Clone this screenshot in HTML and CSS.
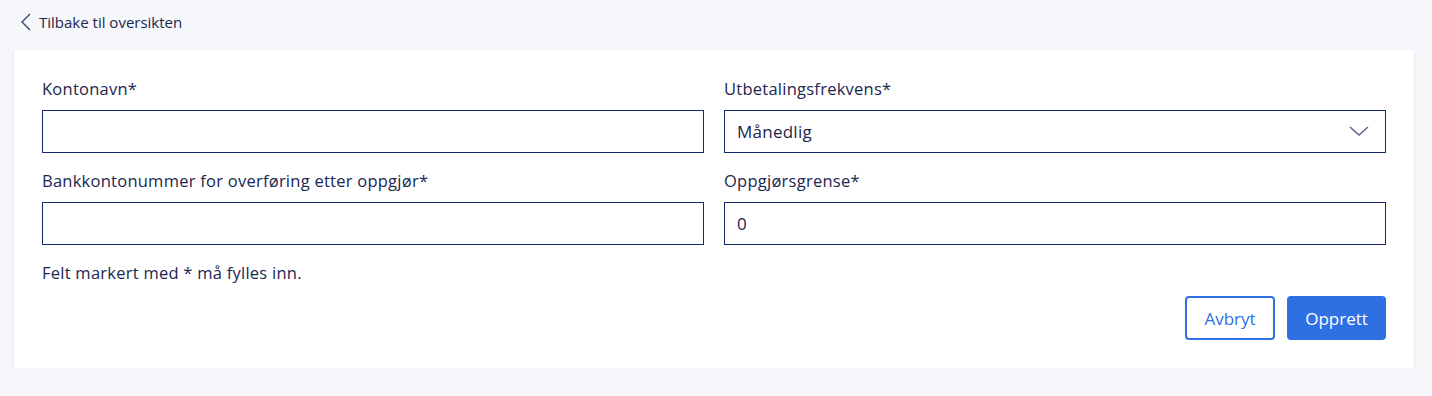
FILE: index.html
```html
<!DOCTYPE html>
<html lang="no">
<head>
  <meta charset="UTF-8" />
  <title>Opprett konto</title>
  <link rel="stylesheet" href="styles.css">
</head>
<body>

<a class="back-link" href="#">
  <svg width="12" height="18" viewBox="0 0 12 18"><path d="M10 1 L2 9 L10 17" fill="none" stroke="#39456b" stroke-width="1.4"/></svg>
  Tilbake til oversikten
</a>

<div class="card">
  <div class="form-grid">
    <div class="field">
      <label>Kontonavn*</label>
      <input type="text" />
    </div>
    <div class="field">
      <label>Utbetalingsfrekvens*</label>
      <div class="select">
        <span>Månedlig</span>
        <svg width="20" height="12" viewBox="0 0 20 12"><path d="M1 1 L10 9 L19 1" fill="none" stroke="#5b6685" stroke-width="1.5"/></svg>
      </div>
    </div>
    <div class="field">
      <label>Bankkontonummer for overføring etter oppgjør*</label>
      <input type="text" />
    </div>
    <div class="field">
      <label>Oppgjørsgrense*</label>
      <input type="text" value="0" />
    </div>
  </div>

  <p class="note">Felt markert med * må fylles inn.</p>

  <div class="actions">
    <button class="btn-outline">Avbryt</button>
    <button class="btn-primary">Opprett</button>
  </div>
</div>

</body>
</html>
```

FILE: styles.css
```css
body {
  margin: 0;
  padding: 0 18px 0 14px;
  background: #f6f7fb;
  font-family: 'Open Sans', sans-serif;
  color: #1b2650;
}

.back-link {
  display: flex;
  align-items: center;
  gap: 7px;
  height: 44px;
  padding-left: 6px;
  font-size: 15px;
  color: #1b2650;
  text-decoration: none;
}

.card {
  background: #fff;
  padding: 29px 28px 28px 28px;
  box-shadow: 0 1px 2px rgba(0, 0, 0, 0.12);
  margin-top: 6px;
}

.form-grid {
  display: grid;
  grid-template-columns: 1fr 1fr;
  column-gap: 20px;
  row-gap: 18px;
}

.field label {
  display: block;
  font-size: 16.5px;
  line-height: 20px;
  letter-spacing: 0.25px;
  margin-bottom: 11px;
}

.field input,
.select {
  box-sizing: border-box;
  width: 100%;
  height: 43px;
  border: 1px solid #14296a;
  border-radius: 0;
  padding: 0 12px;
  font-family: inherit;
  font-size: 17px;
  letter-spacing: 0.25px;
  color: #1b2650;
  background: #fff;
  outline: none;
}

.select {
  display: flex;
  align-items: center;
  justify-content: space-between;
  padding-right: 16px;
}

.note {
  margin: 18px 0 0 0;
  font-size: 16.5px;
  line-height: 20px;
  letter-spacing: 0.25px;
}

.actions {
  display: flex;
  justify-content: flex-end;
  gap: 12px;
  margin-top: 13px;
}

.actions button {
  height: 44px;
  border-radius: 4px;
  font-family: inherit;
  font-size: 17px;
  cursor: pointer;
}

.btn-outline {
  width: 90px;
  background: #fff;
  border: 2px solid #2e6fe3;
  color: #2e6fe3;
}

.btn-primary {
  width: 99px;
  background: #2e6fe3;
  border: none;
  color: #fff;
}
```
